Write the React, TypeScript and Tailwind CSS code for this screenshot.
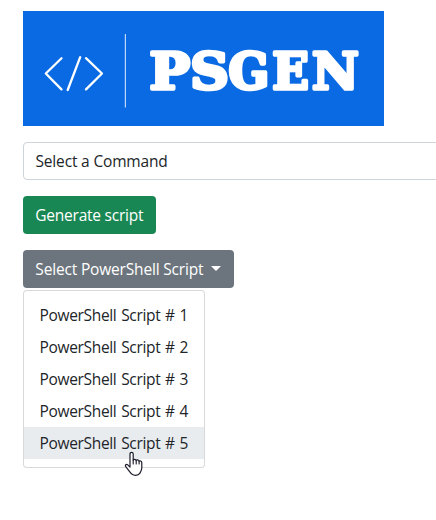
const scripts = [1, 2, 3, 4, 5];

const wordmark = [
  { letter: "P", x: 126.4, width: 40.5 },
  { letter: "S", x: 167.2, width: 38.6 },
  { letter: "G", x: 205.4, width: 40.8 },
  { letter: "E", x: 249.2, width: 36.6 },
  { letter: "N", x: 289, width: 46.8 },
];

function Logo() {
  return (
    <svg viewBox="0 0 361 115" className="block h-[115px] w-[361px] bg-[#0a6ae3]" role="img" aria-label="PSGEN">
      <g fill="none" stroke="#fff" strokeWidth="2.3" strokeLinecap="round" strokeLinejoin="round">
        <path d="M38.5 47.2 22.8 62.5 38.5 78.4" />
        <path d="M57.2 46.2 44.7 79" />
        <path d="M63 47.2 79 62.5 63 78.4" />
      </g>
      <path d="M102.4 23v73.6" stroke="#bcd7fa" strokeWidth="1.2" />
      <text
        y="77.6"
        fill="#fff"
        stroke="#fff"
        strokeWidth="3.6"
        strokeLinejoin="round"
        className="font-['DejaVu_Serif',serif] text-[49.5px] font-bold"
      >
        {wordmark.map(({ letter, x, width }) => (
          <tspan key={letter} x={x} textLength={width} lengthAdjust="spacingAndGlyphs">
            {letter}
          </tspan>
        ))}
      </text>
    </svg>
  );
}

function HandCursor() {
  return (
    <svg viewBox="0 0 20 26" className="absolute left-[100px] top-[160px] h-[26px] w-[20px]" aria-hidden="true">
      <path
        d="M6 16.2V3.1C6 1.9 6.7 1.3 7.6 1.3S9.2 1.9 9.2 3.1V9.3C9.2 7.9 12 7.9 12.2 9.6 12.5 8.4 14.9 8.6 15.1 10.3 15.6 9.5 17.8 9.7 17.8 11.8V16.8C17.8 19.3 16.5 20.6 16 22.1 15 23.6 13.2 24.3 11.5 24.3 8.6 24.3 6.7 22.5 5.4 20.3L1.6 15.4C.8 14.2 2.2 12.8 3.5 13.7Z"
        fill="#fff"
        stroke="#1b1b2b"
        strokeWidth="1.2"
        strokeLinejoin="round"
      />
      <path d="M9.2 9v4M12.2 9.5v3.5M15.1 10.2V13" fill="none" stroke="#1b1b2b" strokeWidth="1.1" strokeLinecap="round" />
    </svg>
  );
}

export default function App() {
  return (
    <main className="h-[520px] w-[436px] overflow-hidden bg-white pl-[23px] pt-[11px] font-['Open_Sans','Noto_Sans',sans-serif] text-[15.5px] leading-6 text-[#212529]">
      <Logo />
      <button className="mt-4 flex h-[38px] w-[500px] items-center rounded border border-[#ced4da] pl-[11.5px] text-left">
        <span className="tracking-[-0.17px]">Select a Command</span>
      </button>
      <button className="mt-4 flex h-[38px] w-[133px] items-center whitespace-nowrap rounded bg-[#198754] pl-[12.3px] text-white">
        <span className="tracking-[-0.23px]">Generate script</span>
      </button>
      <div className="relative mt-4">
        <button className="flex h-[38px] w-[211px] items-center whitespace-nowrap rounded bg-[#6c757d] pl-[12.3px] pr-[13px] text-white">
          <span className="tracking-[-0.17px]">Select PowerShell Script</span>
          <span className="mb-0.5 ml-auto h-0 w-0 border-x-[5px] border-t-[5px] border-x-transparent border-t-white" />
        </button>
        <div className="relative mt-0.5 h-[178px] w-[182px] rounded border border-black/15 bg-white py-2">
          <ul>
            {scripts.map((n) => (
              <li
                key={n}
                className={`flex h-8 items-center whitespace-nowrap pl-[15.5px] tracking-[-0.33px] [word-spacing:1px] ${n === 5 ? "bg-[#e9ecef]" : ""}`}
              >
                PowerShell Script # {n}
              </li>
            ))}
          </ul>
          <HandCursor />
        </div>
      </div>
    </main>
  );
}
